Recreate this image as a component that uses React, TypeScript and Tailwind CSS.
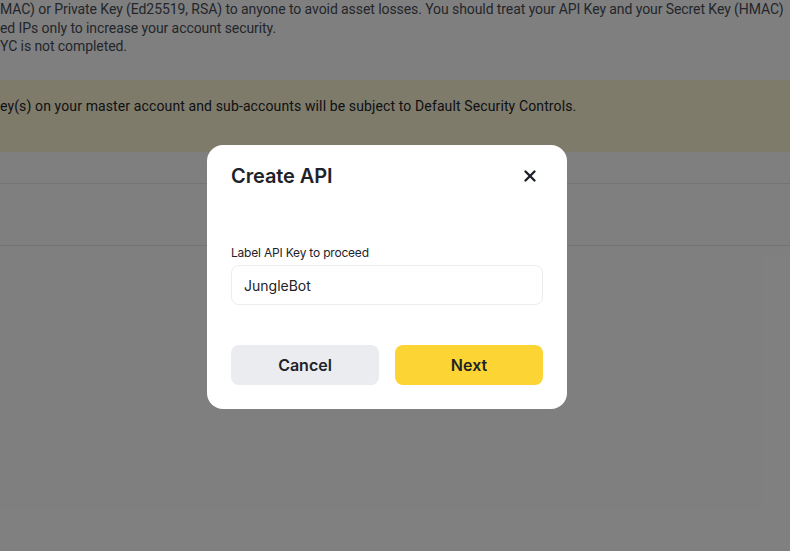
import { X } from 'lucide-react';

function App() {
  return (
    <div className="relative h-[551px] w-[790px] overflow-hidden bg-white font-['Roboto',sans-serif]">
      {/* page behind the dialog */}
      <div className="text-[14px] leading-[18.5px] tracking-[-0.08px] text-[#474d57] whitespace-nowrap">
        <p>
          MAC) or Private Key (Ed25519, RSA) to anyone to avoid asset losses. You should treat your API Key and your Secret Key (HMAC)
        </p>
        <p>ed IPs only to increase your account security.</p>
        <p>YC is not completed.</p>
      </div>
      <div className="mt-[24.5px] flex h-[72px] items-center bg-[#fcf6d6] pb-[20px] text-[14px] tracking-[0.12px] text-[#1e2329] whitespace-nowrap">
        ey(s) on your master account and sub-accounts will be subject to Default Security Controls.
      </div>
      <div className="mt-[31px] border-t border-[#e6e8eb]" />
      <div className="mt-[61px] border-t border-[#e6e8eb]" />

      {/* overlay */}
      <div className="absolute inset-0 bg-black/50 pt-[145px] font-['Inter',sans-serif]">
        <div className="ml-[207px] w-[360px] rounded-2xl bg-white px-6 pb-6 pt-[17px]">
          <div className="flex items-center justify-between">
            <h2 className="text-[20px] font-semibold leading-7 tracking-[-0.1px] text-[#1e2329]">Create API</h2>
            <X className="mr-[4px] h-[18px] w-[18px] text-[#1e2329]" strokeWidth={3.2} />
          </div>
          <label className="mt-[55px] block text-[12px] leading-4 tracking-[-0.2px] text-[#1e2329]">
            Label API Key to proceed
          </label>
          <div className="mt-[4px] flex h-10 items-center rounded-lg border border-[#eaecef] px-3 text-[14px] text-[#1e2329]">
            JungleBot
          </div>
          <div className="mt-10 flex gap-4">
            <button className="h-10 flex-1 rounded-lg bg-[#eaecef] text-[16px] font-semibold text-[#1e2329]">
              Cancel
            </button>
            <button className="h-10 flex-1 rounded-lg bg-[#fcd535] text-[16px] font-semibold text-[#1e2329]">
              Next
            </button>
          </div>
        </div>
      </div>
    </div>
  );
}

export default App;
